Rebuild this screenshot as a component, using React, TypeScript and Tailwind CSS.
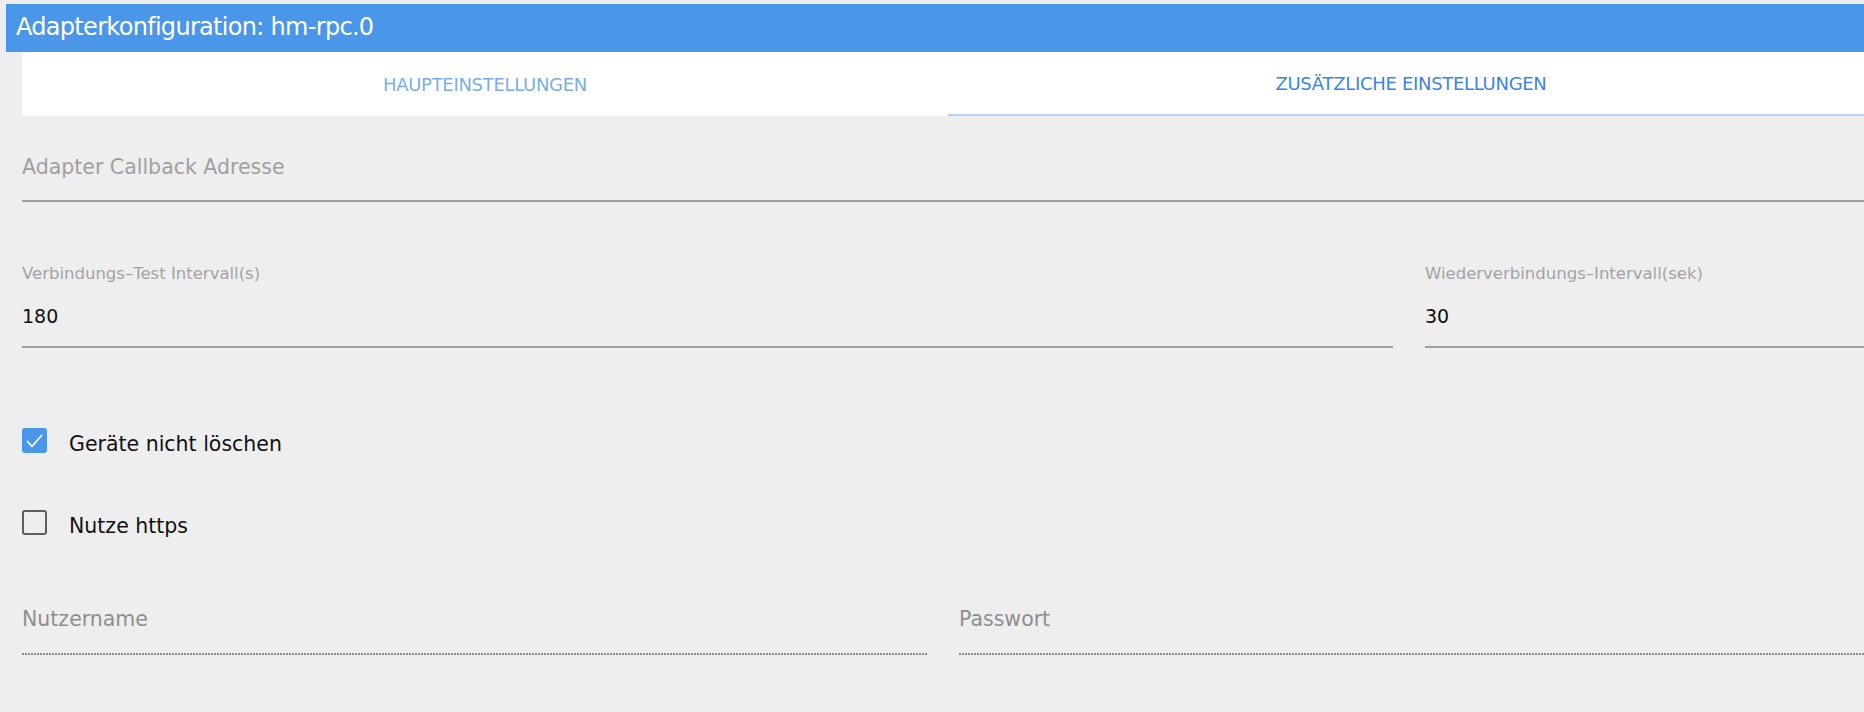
import type { ReactNode } from 'react'

function Tab({ label, active }: { label: string; active?: boolean }) {
  return (
    <div
      className={
        'flex flex-1 items-center justify-center text-[18px] tracking-[-0.3px] ' +
        (active ? 'border-b-2 border-[#b3d4f5] text-[#3b86df]' : 'text-[#7aaeea]')
      }
    >
      {label}
    </div>
  )
}

function Underlined({ children, dotted, className = '' }: { children: ReactNode; dotted?: boolean; className?: string }) {
  return (
    <div className={className}>
      {children}
      {dotted ? (
        <div className="h-[2px] bg-[repeating-linear-gradient(90deg,#8c8c8c_0_2px,transparent_2px_3px)]" />
      ) : (
        <div className="h-[2px] bg-[#9f9f9f]" />
      )}
    </div>
  )
}

function Checkbox({ checked, label, className = '' }: { checked?: boolean; label: string; className?: string }) {
  return (
    <div className={'flex h-[25px] items-center ' + className}>
      {checked ? (
        <span className="grid h-[25px] w-[25px] place-items-center rounded-[3px] bg-[#4a96e8]">
          <svg viewBox="0 0 25 25" className="h-[25px] w-[25px]" aria-hidden="true">
            <path d="M5.5 13.5 L10 18.5 L19.5 7.5" fill="none" stroke="#fff" strokeWidth="1.7" strokeLinecap="round" strokeLinejoin="round" />
          </svg>
        </span>
      ) : (
        <span className="h-[25px] w-[25px] rounded-[3px] border-2 border-[#5e5e5e]" />
      )}
      <span className="ml-[22px] pt-[6px] text-[20.5px] leading-[24px] text-[#111]">{label}</span>
    </div>
  )
}

export default function App() {
  return (
    <div className="h-[712px] w-[1864px] overflow-hidden bg-[#eeeeee] pt-[4px] font-['DejaVu_Sans',sans-serif]">
      <header className="ml-[6px] flex h-[48px] items-center bg-[#4a96e8] pb-[2px] pl-[10px] text-[24px] tracking-[-0.7px] text-white">
        Adapterkonfiguration: hm-rpc.0
      </header>

      <nav className="ml-[22px] flex h-[64px] w-[1852px] bg-white">
        <Tab label="HAUPTEINSTELLUNGEN" />
        <Tab label="ZUSÄTZLICHE EINSTELLUNGEN" active />
      </nav>

      <main className="ml-[22px] w-[1842px]">
        <Underlined className="mt-[39px]">
          <div className="pb-[21px] text-[20.5px] leading-[24px] text-[#a0a0a0]">Adapter Callback Adresse</div>
        </Underlined>

        <div className="mt-[62px] grid grid-cols-[1371px_1fr] gap-8">
          <Underlined>
            <div className="text-[16.5px] leading-[20px] text-[#a3a3a3]">Verbindungs–Test Intervall(s)</div>
            <div className="mt-[20px] pb-[18px] text-[19px] leading-[24px] text-[#111]">180</div>
          </Underlined>
          <Underlined>
            <div className="text-[16.5px] leading-[20px] text-[#a3a3a3]">Wiederverbindungs–Intervall(sek)</div>
            <div className="mt-[20px] pb-[18px] text-[19px] leading-[24px] text-[#111]">30</div>
          </Underlined>
        </div>

        <Checkbox checked label="Geräte nicht löschen" className="mt-[80px]" />
        <Checkbox label="Nutze https" className="mt-[57px]" />

        <div className="mt-[72px] grid grid-cols-2 gap-8">
          <Underlined dotted>
            <div className="pb-[22px] text-[20.5px] leading-[24px] text-[#8e8e8e]">Nutzername</div>
          </Underlined>
          <Underlined dotted>
            <div className="pb-[22px] text-[20.5px] leading-[24px] text-[#8e8e8e]">Passwort</div>
          </Underlined>
        </div>
      </main>
    </div>
  )
}
